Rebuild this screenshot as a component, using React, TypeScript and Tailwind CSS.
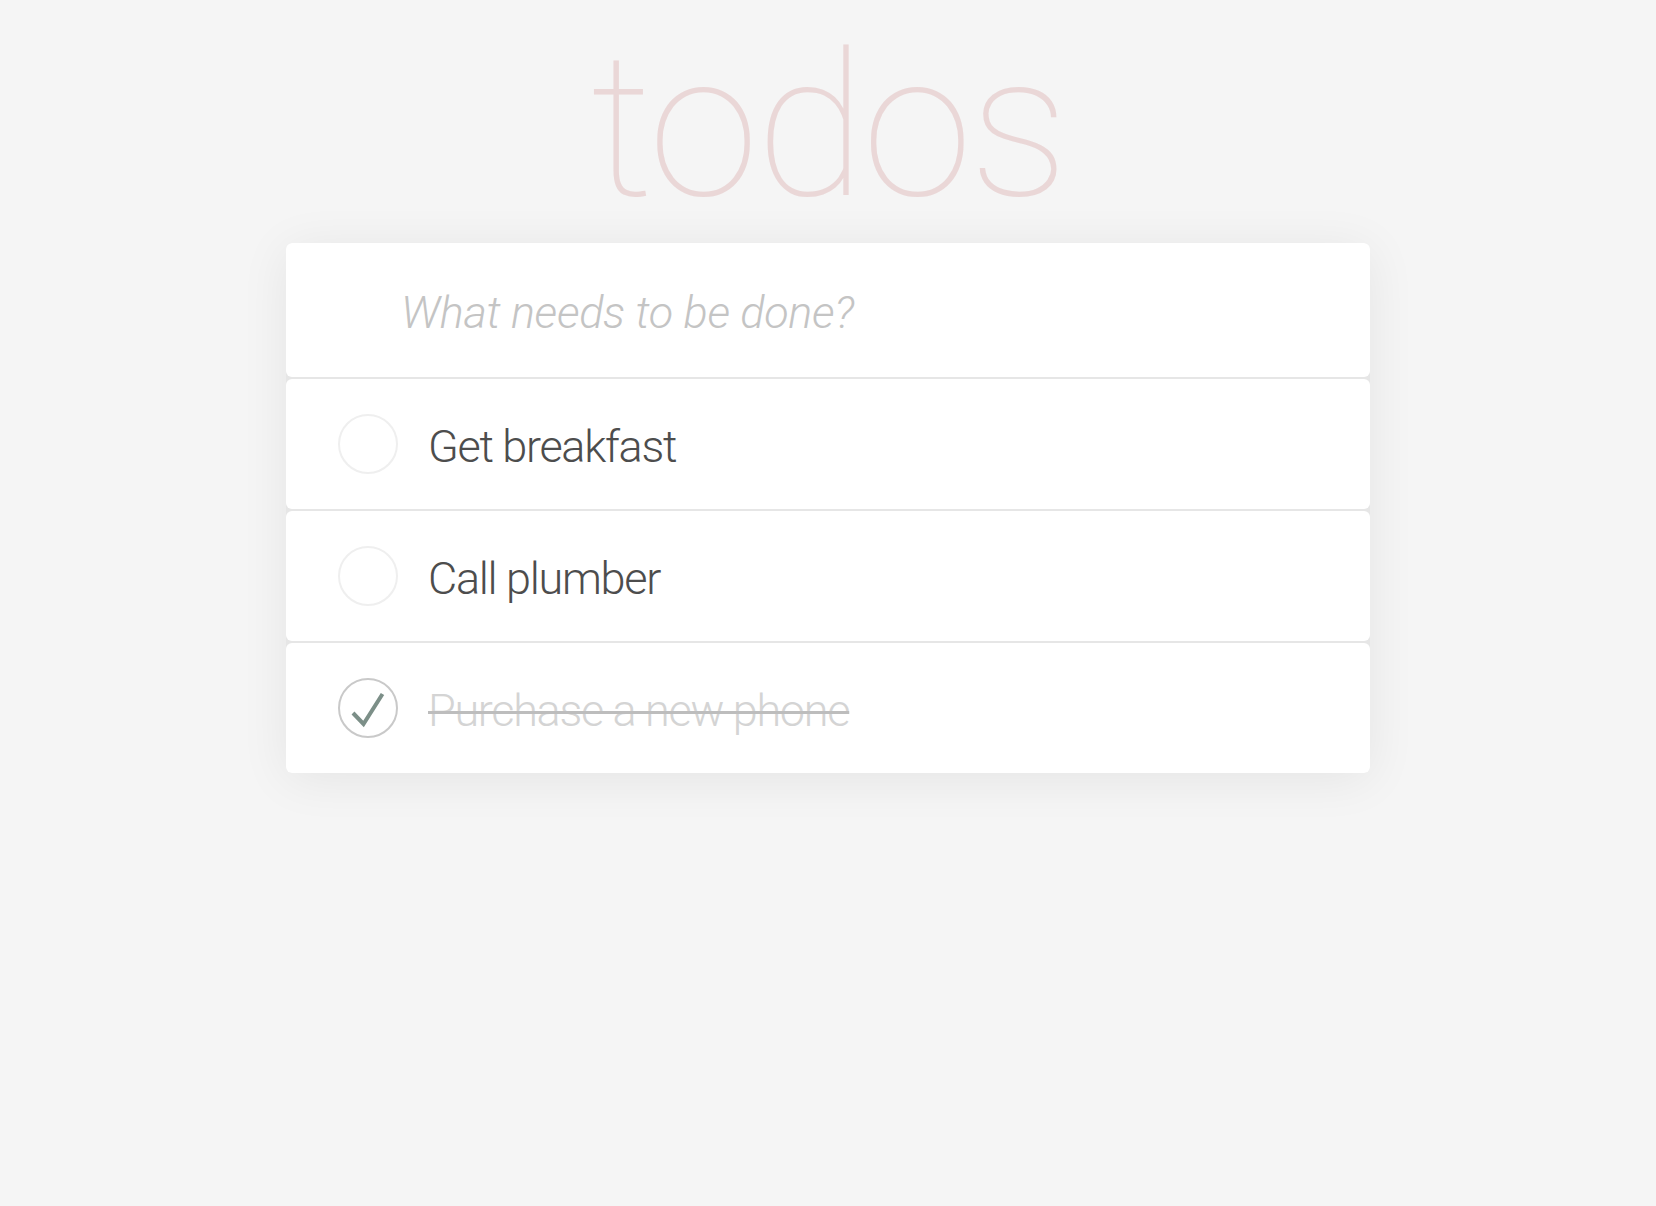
import { useState } from 'react'

type Todo = { id: number; title: string; done: boolean }

const initial: Todo[] = [
  { id: 1, title: 'Get breakfast', done: false },
  { id: 2, title: 'Call plumber', done: false },
  { id: 3, title: 'Purchase a new phone', done: true },
]

function Toggle({ done, onClick }: { done: boolean; onClick: () => void }) {
  return (
    <button
      onClick={onClick}
      className={
        done
          ? 'flex h-[60px] w-[60px] shrink-0 items-center justify-center rounded-full border-2 border-[#c9c9c9]'
          : 'flex h-[60px] w-[60px] shrink-0 items-center justify-center rounded-full border-2 border-[#efefef]'
      }
    >
      {done && (
        <svg width="60" height="60" viewBox="0 0 60 60" fill="none" className="-m-[2px]">
          <path d="M15 35 L25.5 46 L44.5 16" stroke="#7c8f88" strokeWidth="4" />
        </svg>
      )}
    </button>
  )
}

export default function App() {
  const [todos, setTodos] = useState(initial)
  const [draft, setDraft] = useState('')

  const toggle = (id: number) =>
    setTodos(prev => prev.map(t => (t.id === id ? { ...t, done: !t.done } : t)))

  return (
    <div className="min-h-screen bg-[#f5f5f5] flex flex-col items-center font-['Helvetica_Neue','Roboto',sans-serif]">
      <h1 className="mt-[27px] text-[200px] leading-[200px] font-thin tracking-[-3px] text-[#ead7d7]">todos</h1>

      <div className="mt-[16px] w-[1084px] rounded-[6px] bg-[#e6e6e6] flex flex-col gap-[2px] shadow-[0_6px_50px_rgba(0,0,0,0.07)]">
        <div className="h-[134px] rounded-[6px] bg-white flex items-center pt-[6px]">
          <input
            value={draft}
            onChange={e => setDraft(e.target.value)}
            placeholder="What needs to be done?"
            className="w-full pl-[115px] pr-8 bg-transparent text-[45px] tracking-[-0.3px] font-light text-[#4d4d4d] outline-none placeholder:italic placeholder:font-light placeholder:text-[#c4c4c4]"
          />
        </div>

        {todos.map(t => (
          <div key={t.id} className="h-[130px] rounded-[6px] bg-white flex items-center pl-[52px] pr-8">
            <Toggle done={t.done} onClick={() => toggle(t.id)} />
            <span
              className={
                t.done
                  ? 'ml-[30px] pt-[6px] text-[45px] tracking-[-1.3px] font-light text-[#d4d4d4] line-through decoration-[#bdbdbd] decoration-[3px]'
                  : 'ml-[30px] pt-[6px] text-[45px] tracking-[-1.3px] font-light text-[#4d4d4d]'
              }
            >
              {t.title}
            </span>
          </div>
        ))}
      </div>
    </div>
  )
}
